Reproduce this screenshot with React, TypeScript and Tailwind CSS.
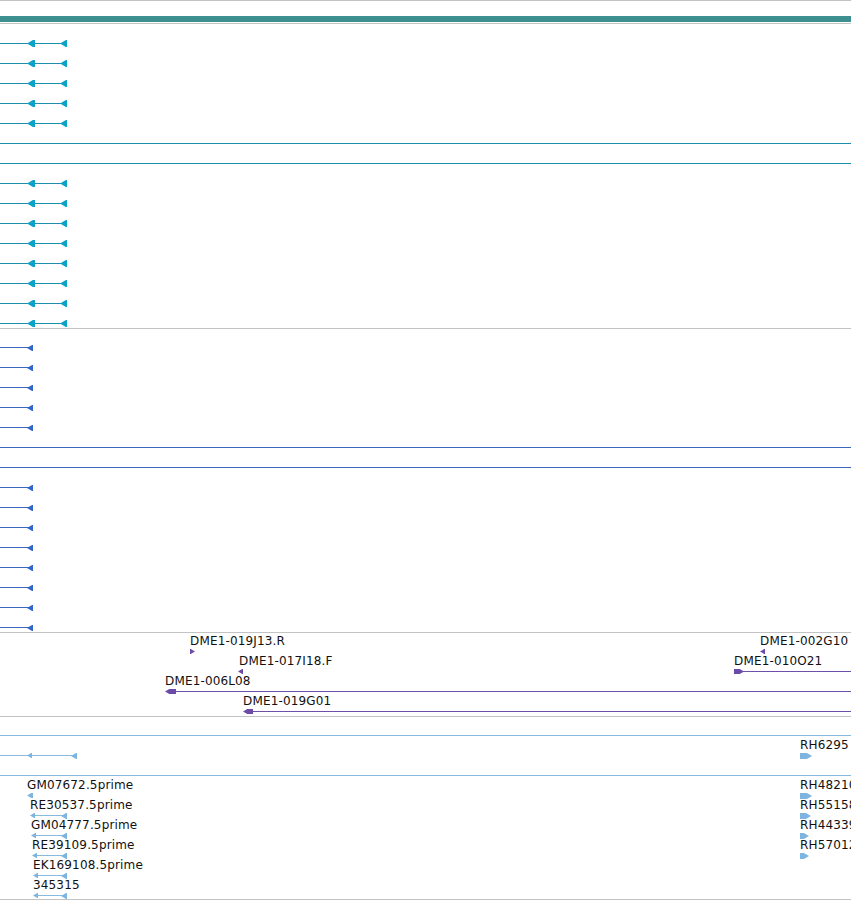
import React from 'react';

type Arrow = { x: number; w: number; h: number; dir: 'l' | 'r' };
type Feature = {
  label?: string;
  lx?: number;
  from?: number;
  to?: number;
  arrows?: Arrow[];
};
type Row = Feature[];

const TEAL = { line: '#1e8fab', fill: '#0aa2c6' };
const BLUE = { line: '#3a68bf', fill: '#3166c8' };
const PURPLE = { line: '#6e50a8', fill: '#6b4aa8' };
const SKY = { line: '#86bbdf', fill: '#7db5e0' };

const ArrowHead = ({ a, color }: { a: Arrow; color: string }) => {
  const tip = Math.min(a.w, a.h * 0.85);
  const pts =
    a.dir === 'l'
      ? `0,${a.h / 2} ${tip},0 ${a.w},0 ${a.w},${a.h} ${tip},${a.h}`
      : `0,0 ${a.w - tip},0 ${a.w},${a.h / 2} ${a.w - tip},${a.h} 0,${a.h}`;
  return (
    <svg
      className="absolute"
      width={a.w}
      height={a.h}
      viewBox={`0 0 ${a.w} ${a.h}`}
      style={{ left: a.x, top: 15.5 - a.h / 2 }}
    >
      <polygon points={pts} fill={color} />
    </svg>
  );
};

const TrackRow = ({
  row,
  colors,
  short,
}: {
  row: Row;
  colors: { line: string; fill: string };
  short?: boolean;
}) => (
  <div className={short ? 'relative h-[19px]' : 'relative h-[20px]'}>
    {row.map((f, i) => (
      <React.Fragment key={i}>
        {f.label && (
          <span
            className="absolute top-[-1px] whitespace-nowrap text-[12px] leading-[12px] tracking-[0.15px] text-[#111]"
            style={{ left: f.lx }}
          >
            {f.label}
          </span>
        )}
        {f.from !== undefined && f.to !== undefined && (
          <div
            className="absolute top-[15px] h-px"
            style={{ left: f.from, width: f.to - f.from, background: colors.line }}
          />
        )}
        {f.arrows?.map((a, j) => (
          <ArrowHead key={j} a={a} color={colors.fill} />
        ))}
      </React.Fragment>
    ))}
  </div>
);

const Sep = () => <div className="h-px bg-[#c3c3c3]" />;

const Track = ({
  rows,
  colors,
  lastShort,
}: {
  rows: Row[];
  colors: { line: string; fill: string };
  lastShort?: boolean;
}) => (
  <div className="flex flex-col pt-[3px]">
    {rows.map((r, i) => (
      <TrackRow key={i} row={r} colors={colors} short={lastShort && i === rows.length - 1} />
    ))}
  </div>
);

const full: Row = [{ from: 0, to: 851 }];

const tealPair: Row = [
  {
    from: 0,
    to: 64,
    arrows: [
      { x: 27, w: 8, h: 7, dir: 'l' },
      { x: 60, w: 7, h: 7, dir: 'l' },
    ],
  },
];

const blueOne: Row = [{ from: 0, to: 30, arrows: [{ x: 27, w: 6, h: 6, dir: 'l' }] }];

const tealRows: Row[] = [
  ...Array(5).fill(tealPair),
  full,
  full,
  ...Array(8).fill(tealPair),
];

const blueRows: Row[] = [
  ...Array(5).fill(blueOne),
  full,
  full,
  ...Array(8).fill(blueOne),
];

const purpleRows: Row[] = [
  [
    { label: 'DME1-019J13.R', lx: 190, arrows: [{ x: 190, w: 5, h: 5, dir: 'r' }] },
    { label: 'DME1-002G10', lx: 760, arrows: [{ x: 760, w: 5, h: 5, dir: 'l' }] },
  ],
  [
    { label: 'DME1-017I18.F', lx: 239, arrows: [{ x: 238, w: 5, h: 5, dir: 'l' }] },
    { label: 'DME1-010O21', lx: 734, from: 740, to: 851, arrows: [{ x: 734, w: 10, h: 5, dir: 'r' }] },
  ],
  [{ label: 'DME1-006L08', lx: 165, from: 170, to: 851, arrows: [{ x: 165, w: 11, h: 5, dir: 'l' }] }],
  [{ label: 'DME1-019G01', lx: 243, from: 248, to: 851, arrows: [{ x: 243, w: 10, h: 5, dir: 'l' }] }],
];

const skyPair = (x: number): Feature => ({
  from: x + 3,
  to: 64,
  arrows: [
    { x, w: 5, h: 5, dir: 'l' },
    { x: 61, w: 6, h: 6, dir: 'l' },
  ],
});

const skyRows: Row[] = [
  full,
  [
    {
      from: 0,
      to: 74,
      arrows: [
        { x: 27, w: 5, h: 5, dir: 'l' },
        { x: 71, w: 6, h: 6, dir: 'l' },
      ],
    },
    { label: 'RH6295', lx: 800, arrows: [{ x: 800, w: 12, h: 6, dir: 'r' }] },
  ],
  full,
  [
    { label: 'GM07672.5prime', lx: 27, arrows: [{ x: 27, w: 6, h: 5, dir: 'l' }] },
    { label: 'RH48210', lx: 800, arrows: [{ x: 800, w: 12, h: 6, dir: 'r' }] },
  ],
  [
    { label: 'RE30537.5prime', lx: 30, ...skyPair(30) },
    { label: 'RH55158', lx: 800, arrows: [{ x: 800, w: 11, h: 6, dir: 'r' }] },
  ],
  [
    { label: 'GM04777.5prime', lx: 31, ...skyPair(31) },
    { label: 'RH44339', lx: 800, arrows: [{ x: 800, w: 9, h: 6, dir: 'r' }] },
  ],
  [
    { label: 'RE39109.5prime', lx: 32, ...skyPair(32) },
    { label: 'RH57012', lx: 800, arrows: [{ x: 800, w: 9, h: 6, dir: 'r' }] },
  ],
  [{ label: 'EK169108.5prime', lx: 33, ...skyPair(33) }],
  [{ label: '345315', lx: 33, ...skyPair(33) }],
];

export default function App() {
  return (
    <div
      className="h-[900px] w-[851px] overflow-hidden bg-white"
      style={{ fontFamily: '"DejaVu Sans", Verdana, sans-serif' }}
    >
      <Sep />
      <div className="h-[15px]" />
      <div className="h-[6px] bg-[#3e9090]" />
      <div className="h-px" />
      <Sep />
      <div className="h-px" />
      <Track rows={tealRows} colors={TEAL} />
      <Sep />
      <Track rows={blueRows} colors={BLUE} />
      <Sep />
      <Track rows={purpleRows} colors={PURPLE} />
      <Sep />
      <Track rows={skyRows} colors={SKY} lastShort />
      <Sep />
    </div>
  );
}
